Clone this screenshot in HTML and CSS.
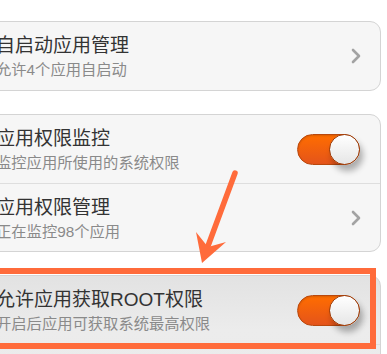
FILE: index.html
```html
<!DOCTYPE html>
<html lang="zh-CN">
<head>
    <meta charset="UTF-8">
    <meta name="viewport" content="width=device-width, initial-scale=1.0">
    <title>应用权限</title>
    <link rel="stylesheet" href="styles.css">
</head>
<body>

    <div class="list">
        <div class="card">
            <div class="row">
                <div class="text">
                    <div class="title">自启动应用管理</div>
                    <div class="sub">允许4个应用自启动</div>
                </div>
                <svg class="chevron" viewBox="0 0 10 16"><polyline points="2,2 8,8 2,14" /></svg>
            </div>
        </div>

        <div class="card">
            <div class="row">
                <div class="text">
                    <div class="title">应用权限监控</div>
                    <div class="sub">监控应用所使用的系统权限</div>
                </div>
                <div class="toggle"><span class="knob"></span></div>
            </div>
            <div class="row">
                <div class="text">
                    <div class="title">应用权限管理</div>
                    <div class="sub">正在监控98个应用</div>
                </div>
                <svg class="chevron" viewBox="0 0 10 16"><polyline points="2,2 8,8 2,14" /></svg>
            </div>
        </div>

        <div class="card card-pressed">
            <div class="row">
                <div class="text">
                    <div class="title">允许应用获取ROOT权限</div>
                    <div class="sub">开启后应用可获取系统最高权限</div>
                </div>
                <div class="toggle"><span class="knob"></span></div>
            </div>
            <div class="row"></div>
        </div>
    </div>

    <!-- annotation drawn over the screenshot -->
    <div class="highlight"></div>
    <svg class="arrow" width="387" height="354" viewBox="0 0 387 354">
        <line x1="235" y1="173" x2="208" y2="246" />
        <polygon points="202,263 196,232 208,247 226,242" />
    </svg>

</body>
</html>
```

FILE: styles.css
```css
body {
    margin: 0;
    background-color: #ffffff;
    font-family: "Liberation Sans", "Noto Sans CJK SC", sans-serif;
    overflow: hidden;
    height: 354px;
    position: relative;
}
.list {
    margin: 0 6px 0 -20px;
    padding-top: 21px;
    display: flex;
    flex-direction: column;
    gap: 23px;
}
.card {
    background-color: #f6f6f6;
    border: 1px solid #d4d4d4;
    border-radius: 11px;
}
.card-pressed {
    background: linear-gradient(#e2e2e2, #ececec 40%, #eaeaea);
}
.row {
    height: 68px;
    box-sizing: border-box;
    padding: 0 20px 0 15px;
    display: flex;
    align-items: center;
    justify-content: space-between;
    border-top: 1px solid #dedede;
}
.row:first-child {
    border-top: none;
}
.text {
    align-self: flex-start;
    padding-top: 12px;
}
.title {
    font-size: 19px;
    line-height: 24px;
    color: #333333;
}
.sub {
    font-size: 15.3px;
    line-height: 20px;
    color: #8a8a8a;
    margin-top: 2px;
}
.chevron {
    width: 10px;
    height: 16px;
    margin-right: -1px;
}
.chevron polyline {
    fill: none;
    stroke: #a3a3a3;
    stroke-width: 2.6;
    stroke-linecap: round;
    stroke-linejoin: round;
}
.toggle {
    position: relative;
    width: 63px;
    height: 31px;
    box-sizing: border-box;
    border-radius: 16px;
    border: 1px solid #b9480d;
    background: linear-gradient(#ff6d00, #e4541b);
    box-shadow: inset 0 1px 2px rgba(0,0,0,0.15);
}
.knob {
    position: absolute;
    top: -1px;
    right: -1px;
    width: 31px;
    height: 31px;
    box-sizing: border-box;
    border-radius: 50%;
    border: 1px solid #9c3e0c;
    background: linear-gradient(#ffffff, #e6e6e6);
    box-shadow: 3px 6px 6px rgba(0,0,0,0.3);
}
.highlight {
    position: absolute;
    left: -10px;
    top: 268px;
    width: 386px;
    height: 81px;
    box-sizing: border-box;
    border: 6px solid #ff6b3b;
}
.arrow {
    position: absolute;
    left: 0;
    top: 0;
}
.arrow line {
    stroke: #ff6b3b;
    stroke-width: 5.5;
    stroke-linecap: round;
}
.arrow polygon {
    fill: #ff6b3b;
}
```
